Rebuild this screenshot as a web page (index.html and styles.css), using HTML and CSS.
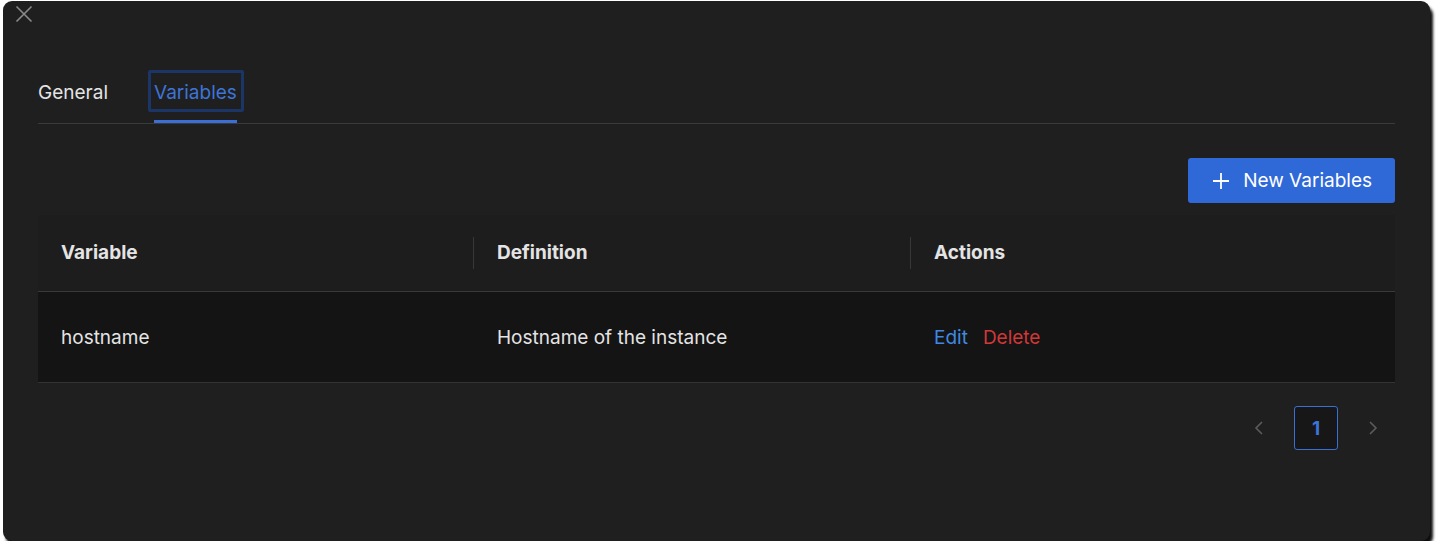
FILE: index.html
```html
<!DOCTYPE html>
<html lang="en">
<head>
<meta charset="utf-8">
<title>Variables</title>
<link rel="stylesheet" href="styles.css">
</head>
<body>
<div class="modal">
  <button class="close" aria-label="Close">
    <svg width="18" height="18" viewBox="0 0 18 18"><path d="M1.5 1.5 L16.5 16.5 M16.5 1.5 L1.5 16.5" stroke="#8a8a8a" stroke-width="1.6" fill="none"/></svg>
  </button>
  <nav class="tabs">
    <span class="tab">General</span>
    <span class="tab active">Variables</span>
  </nav>
  <div class="toolbar">
    <button class="primary">
      <svg width="18" height="18" viewBox="0 0 18 18"><path d="M9 1 V17 M1 9 H17" stroke="#fff" stroke-width="1.8" fill="none"/></svg>
      <span>New Variables</span>
    </button>
  </div>
  <div class="table">
    <div class="row head">
      <div class="cell sep">Variable</div>
      <div class="cell sep">Definition</div>
      <div class="cell">Actions</div>
    </div>
    <div class="row body">
      <div class="cell">hostname</div>
      <div class="cell">Hostname of the instance</div>
      <div class="cell actions"><a class="edit">Edit</a><a class="delete">Delete</a></div>
    </div>
  </div>
  <div class="pager">
    <span class="pg arrow"><svg width="10" height="16" viewBox="0 0 10 16"><path d="M8 2 L2 8 L8 14" stroke="#5c5c5c" stroke-width="1.6" fill="none"/></svg></span>
    <span class="pg current">1</span>
    <span class="pg arrow"><svg width="10" height="16" viewBox="0 0 10 16"><path d="M2 2 L8 8 L2 14" stroke="#5c5c5c" stroke-width="1.6" fill="none"/></svg></span>
  </div>
</div>
</body>
</html>
```

FILE: styles.css
```css
html, body {
  margin: 0;
  padding: 0;
  background: #ffffff;
}

body {
  font-family: "Inter", "Noto Sans", sans-serif;
  color: #e4e4e4;
}

.modal {
  position: relative;
  margin: 1px 0 0 3px;
  width: 1427px;
  height: 540px;
  box-sizing: border-box;
  background: #1f1f1f;
  border-radius: 9px;
  box-shadow: 3px 5px 3px rgba(0, 0, 0, 0.95);
  padding: 70px 35px 0 35px;
}

.close {
  position: absolute;
  left: 11px;
  top: 3px;
  background: none;
  border: 0;
  padding: 0;
  width: 20px;
  height: 20px;
  display: flex;
  align-items: center;
  justify-content: center;
}

.tabs {
  display: flex;
  gap: 46px;
  border-bottom: 1px solid #3a3a3a;
}

.tab {
  position: relative;
  font-size: 19px;
  line-height: 24px;
  padding: 10px 0 18px;
  color: #e4e4e4;
}

.tab.active {
  color: #3d74d8;
}

.tab.active::before {
  content: "";
  position: absolute;
  left: -6px;
  right: -7px;
  top: -1px;
  bottom: 11px;
  border: 3px solid #1b3566;
  border-radius: 2px;
}

.tab.active::after {
  content: "";
  position: absolute;
  left: 0;
  right: 0;
  bottom: 0;
  height: 3px;
  background: #3a6fd6;
}

.toolbar {
  display: flex;
  justify-content: flex-end;
  margin-top: 34px;
}

.primary {
  display: flex;
  align-items: center;
  gap: 13px;
  height: 45px;
  padding: 0 23px 0 24px;
  background: #2f69d8;
  border: 0;
  border-radius: 3px;
  color: #ffffff;
  font-family: inherit;
  font-size: 19px;
}

.table {
  margin-top: 12px;
}

.row {
  display: grid;
  grid-template-columns: 436px 437px 1fr;
  align-items: center;
}

.row.head {
  height: 76px;
  background: #1d1d1d;
  border-bottom: 1px solid #3a3a3a;
  font-weight: 700;
  font-size: 19px;
}

.row.body {
  height: 91px;
  padding-top: 2px;
  box-sizing: border-box;
  background: #141414;
  border-bottom: 1px solid #333333;
  font-size: 19px;
}

.cell {
  position: relative;
  padding-left: 23px;
  line-height: 24px;
}

.cell.sep::after {
  content: "";
  position: absolute;
  right: 0;
  top: -4px;
  width: 1px;
  height: 32px;
  background: #383838;
}

.actions {
  display: flex;
  gap: 15px;
}

.edit {
  color: #3f89e2;
}

.delete {
  color: #d03838;
}

.pager {
  display: flex;
  justify-content: flex-end;
  gap: 13px;
  margin-top: 23px;
}

.pg {
  width: 44px;
  height: 44px;
  box-sizing: border-box;
  display: flex;
  align-items: center;
  justify-content: center;
}

.pg.current {
  border: 1.5px solid #3a6fd6;
  border-radius: 3px;
  background: #171717;
  color: #3d74d8;
  font-weight: 700;
  font-size: 19px;
}
```
